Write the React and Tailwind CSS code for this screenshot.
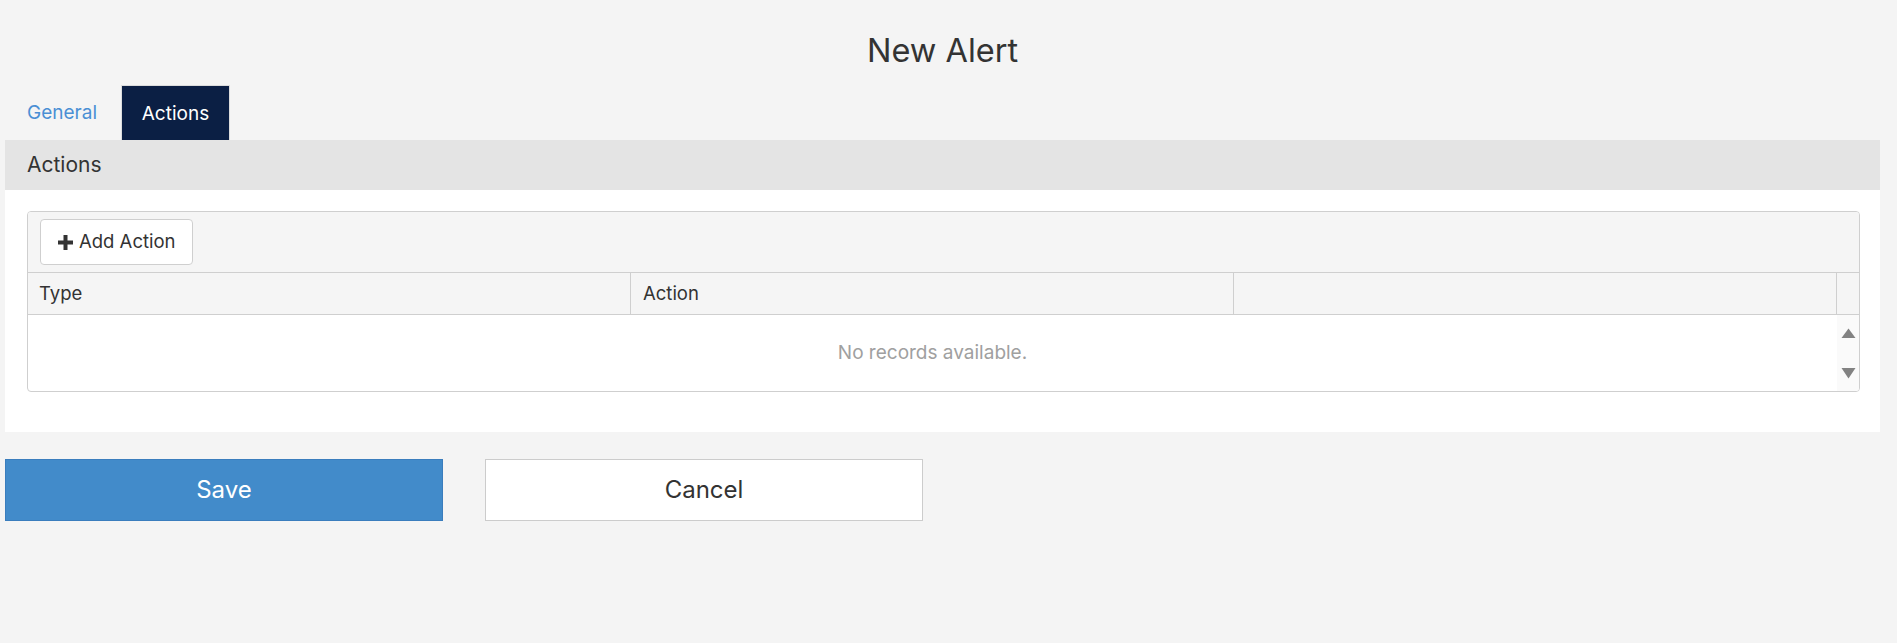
import React from "react";

export default function App() {
  return (
    <div
      className="min-h-[643px] w-full bg-[#f4f4f4] text-[#333]"
      style={{ fontFamily: "Inter, 'Noto Sans', sans-serif" }}
    >
      {/* Title */}
      <div className="ml-[5px] mr-[17px] pt-[32px] h-[85px] text-center text-[32.5px] leading-[38px] text-[#333]">
        New Alert
      </div>

      {/* Tabs */}
      <div className="flex items-stretch pl-[5px] h-[55px] gap-[2px]">
        <div className="flex items-center px-[22px] pt-[2px] text-[19px] text-[#4a8fd4]">
          General
        </div>
        <div className="flex items-center pt-[2px] text-[19px] text-white bg-[#0b1f44] border border-b-0 border-[#dcdcdc] w-[109px] justify-center">
          Actions
        </div>
      </div>

      {/* Panel */}
      <div className="ml-[5px] mr-[17px]">
        <div className="h-[50px] bg-[#e4e4e4] flex items-center pl-[22px] text-[21px] text-[#333]">
          Actions
        </div>
        <div className="bg-white pt-[21px] pb-[40px] pl-[22px] pr-[20px]">
          <div className="border border-[#cfcfcf] rounded-[4px] overflow-hidden">
            {/* Toolbar */}
            <div className="bg-[#f5f5f5] border-b border-[#cfcfcf] pl-[12px] pt-[7px] pb-[7px]">
              <button className="h-[46px] w-[153px] bg-white border border-[#cfcfcf] rounded-[4px] flex items-center pl-[17px] gap-[6px] text-[18.5px] text-[#333]">
                <svg width="15" height="15" viewBox="0 0 15 15" className="shrink-0">
                  <rect x="5.5" y="0" width="4" height="15" fill="#333" />
                  <rect x="0" y="5.5" width="15" height="4" fill="#333" />
                </svg>
                <span>Add Action</span>
              </button>
            </div>
            {/* Header */}
            <div className="flex h-[42px] bg-[#f5f5f5] border-b border-[#cfcfcf] text-[18.5px] text-[#333]">
              <div className="w-[603px] shrink-0 flex items-center pl-[11px] border-r border-[#cfcfcf]">Type</div>
              <div className="w-[603px] shrink-0 flex items-center pl-[12px] border-r border-[#cfcfcf]">Action</div>
              <div className="flex-1 border-r border-[#cfcfcf]"></div>
              <div className="w-[22px]"></div>
            </div>
            {/* Body */}
            <div className="flex h-[76px]">
              <div className="flex-1 flex items-center justify-center text-[19px] text-[#a0a0a0]">
                No records available.
              </div>
              <div className="w-[22px] bg-[#fafafa] flex flex-col items-center pt-[13px]">
                <svg width="15" height="10" viewBox="0 0 15 10">
                  <path d="M7.5 0.5 L14.5 10 L0.5 10 Z" fill="#828282" />
                </svg>
                <svg width="15" height="11" viewBox="0 0 15 11" className="mt-[30px]">
                  <path d="M0.5 0 L14.5 0 L7.5 10.5 Z" fill="#828282" />
                </svg>
              </div>
            </div>
          </div>
        </div>
      </div>

      {/* Buttons */}
      <div className="flex gap-[42px] pl-[5px] mt-[27px]">
        <button className="w-[438px] h-[62px] bg-[#428bca] border border-[#3a7dbd] text-white text-[24px]">
          Save
        </button>
        <button className="w-[438px] h-[62px] bg-white border border-[#cccccc] text-[#333] text-[24px]">
          Cancel
        </button>
      </div>
    </div>
  );
}
